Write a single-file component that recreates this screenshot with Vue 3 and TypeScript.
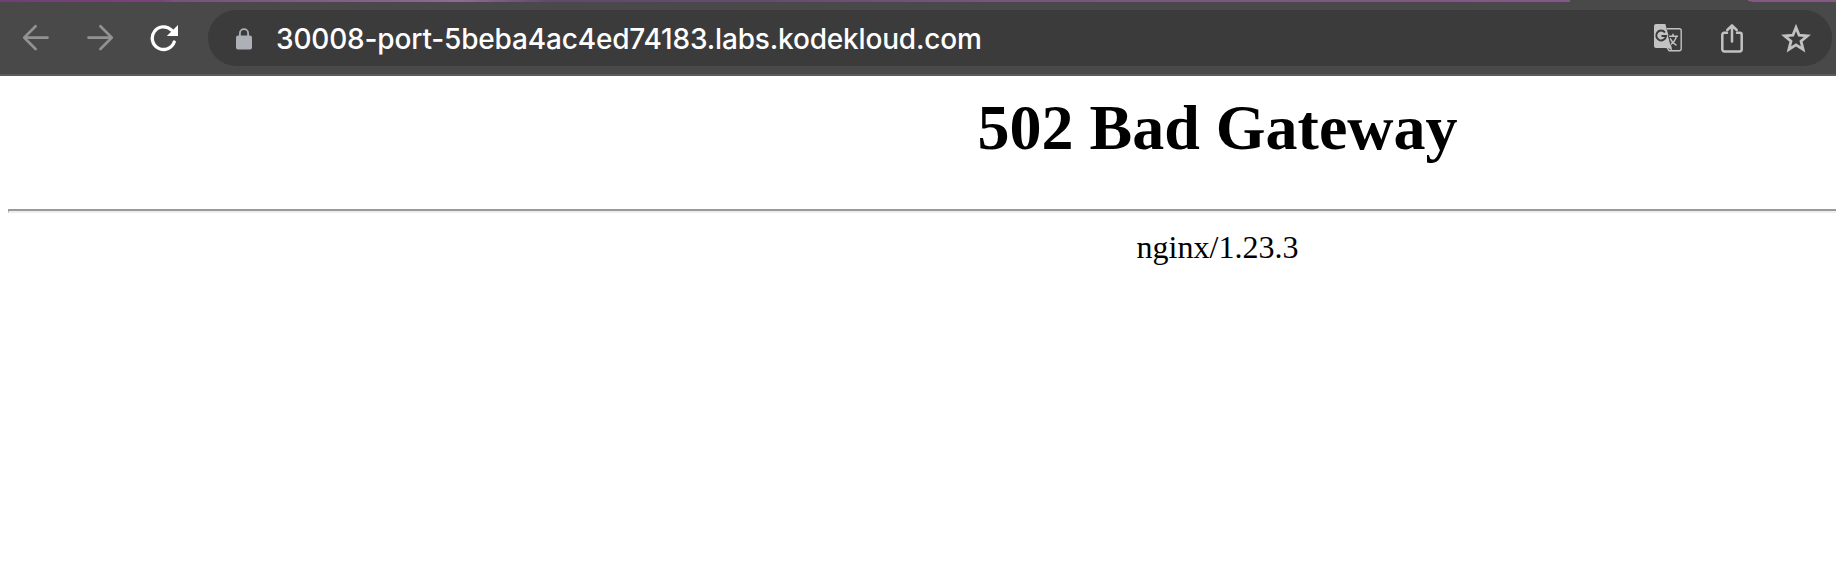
<script setup lang="ts">
const address: string = '30008-port-5beba4ac4ed74183.labs.kodekloud.com'
const title: string = '502 Bad Gateway'
const server: string = 'nginx/1.23.3'
</script>

<template>
  <div class="window">
    <div class="tabstrip">
      <span class="tabs-left"></span>
      <svg class="tabs-right" width="88" height="2" viewBox="0 0 88 2"><path d="M0 0H88V2H6L0 1Z" fill="#865982" /></svg>
    </div>
    <header class="toolbar">
      <button class="nav" aria-label="Back">
        <svg width="28" height="28" viewBox="0 0 28 28" fill="none" stroke="#929292" stroke-width="2.7" stroke-linecap="round" stroke-linejoin="round">
          <path d="M13.6 2.2L2.2 13.6L13.6 25M2.2 13.6H25.5" />
        </svg>
      </button>
      <button class="nav" aria-label="Forward">
        <svg width="28" height="28" viewBox="0 0 28 28" fill="none" stroke="#929292" stroke-width="2.7" stroke-linecap="round" stroke-linejoin="round">
          <path d="M14.4 2.2L25.8 13.6L14.4 25M25.8 13.6H2.5" />
        </svg>
      </button>
      <button class="nav" aria-label="Reload">
        <svg width="28" height="28" viewBox="0 0 28 28">
          <path d="M24.2 18A11.3 11.3 0 1 1 21.6 6.2" fill="none" stroke="#fff" stroke-width="3.3" stroke-linecap="round" />
          <path d="M28 1V12H16.8Z" fill="#fff" />
        </svg>
      </button>
      <div class="omnibox">
        <svg class="lock" width="16" height="22" viewBox="0 0 16 22">
          <path d="M3.9 9V5.2a4.1 4.1 0 0 1 8.2 0V9" fill="none" stroke="#adb0b6" stroke-width="1.8" />
          <rect y="7.4" width="16" height="14" rx="2" fill="#adb0b6" />
        </svg>
        <span class="url">{{ address }}</span>
        <svg class="translate" width="28" height="28" viewBox="0 0 28 28">
          <path d="M13 4.8H25.2a2 2 0 0 1 2 2V24.8a2 2 0 0 1-2 2H15.2L12 22" fill="none" stroke="#c2c2c2" stroke-width="1.4" />
          <path d="M2 0H11.4L17.8 24V26.5L14.6 24H2a2 2 0 0 1-2-2V2a2 2 0 0 1 2-2Z" fill="#c2c2c2" />
          <path d="M11 8.5A4.9 4.9 0 1 0 12 12.1H7.5" fill="none" stroke="#3b3b3b" stroke-width="2" />
          <path d="M14.4 12.3H24M19 9.8V12.3M22.3 12.3C21.5 16.5 19 19 15.5 21M16 14.3C17.6 17.6 20 20 22.5 21.3" fill="none" stroke="#c2c2c2" stroke-width="1.5" />
          <path d="M14.3 11.2L16.7 20.5" stroke="#3b3b3b" stroke-width="1" />
        </svg>
        <svg class="share" width="22" height="30" viewBox="0 0 22 30" fill="none" stroke="#c2c2c2" stroke-width="2.5" stroke-linecap="round" stroke-linejoin="round">
          <path d="M6 9.8H3.2A1.9 1.9 0 0 0 1.3 11.7V26.3A2.1 2.1 0 0 0 3.4 28.4H18.6A2.1 2.1 0 0 0 20.7 26.3V11.7A1.9 1.9 0 0 0 18.8 9.8H16M11 18.6V2.4M6.3 7L11 2.3L15.7 7" />
        </svg>
        <svg class="star" width="30" height="29" viewBox="0 0 30 29">
          <path d="M15 3.5L18.1 11.2L26.4 11.8L20 17.2L22.1 25.5L15 20.9L7.9 25.5L10 17.2L3.6 11.8L11.9 11.2Z" fill="none" stroke="#c2c2c2" stroke-width="2.8" />
        </svg>
      </div>
    </header>
    <main class="page">
      <h1>{{ title }}</h1>
      <div class="rule"></div>
      <p>{{ server }}</p>
    </main>
  </div>
</template>

<style>
body {
  margin: 0;
  background: #fff;
}
</style>

<style scoped>
.window {
  width: 1836px;
  height: 588px;
  overflow: hidden;
  background: #fff;
}
.tabstrip {
  display: flex;
  justify-content: space-between;
  height: 2px;
  background: #494949;
}
.tabs-left {
  width: 1570px;
  background: linear-gradient(90deg, #733e78 0, #7a417d 160px, #79527c 175px, #87608b 380px, #916999 460px, #604870 550px, #654b70 760px, #775680 1000px, #85578a 1568px);
}
.toolbar {
  box-sizing: border-box;
  display: flex;
  align-items: center;
  height: 74px;
  padding: 0 4px 0 22px;
  background: #494949;
  border-bottom: 2px solid #5b5b5b;
}
.nav {
  display: flex;
  width: 28px;
  height: 28px;
  margin-right: 36px;
  padding: 0;
  border: 0;
  background: none;
}
.nav:nth-child(3) {
  margin-right: 30px;
}
.omnibox {
  box-sizing: border-box;
  display: flex;
  align-items: center;
  flex: 1;
  height: 56px;
  padding: 0 21px 0 28px;
  border-radius: 28px;
  background: #3b3b3b;
}
.lock {
  margin-top: 1px;
}
.url {
  flex: 1;
  margin-left: 24px;
  padding-top: 1px;
  color: #fff;
  font: 500 28px/56px Inter, "Liberation Sans", sans-serif;
  letter-spacing: -0.165px;
  white-space: nowrap;
}
.share {
  margin: 0 38px 0 39px;
}
.page {
  width: 2419px;
  margin-left: 8px;
  color: #000;
  font-family: "Liberation Serif", serif;
  text-align: center;
}
h1 {
  margin: 0;
  padding-top: 15px;
  font-size: 64px;
  font-weight: 700;
  line-height: 74px;
}
.rule {
  box-sizing: border-box;
  height: 4px;
  margin-top: 44px;
  border-top: 2px solid #9a9a9a;
  border-left: 1px solid #9a9a9a;
  border-bottom: 2px solid #eee;
}
p {
  margin: 16px 0 0;
  font-size: 32px;
  line-height: 36px;
}
</style>
